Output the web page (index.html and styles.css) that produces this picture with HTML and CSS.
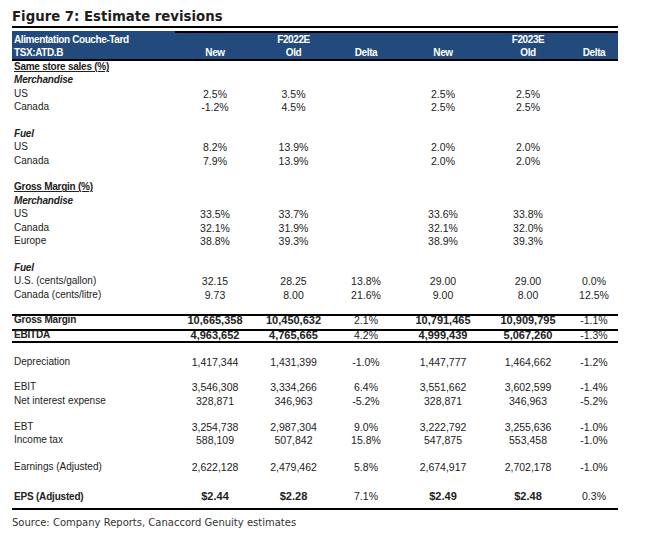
FILE: index.html
```html
<!DOCTYPE html>
<html>
<head>
<meta charset="utf-8">
<link rel="stylesheet" href="styles.css">
</head>
<body>
<div class="fig">
  <h1 class="title">Figure 7: Estimate revisions</h1>
  <table class="est">
    <colgroup>
      <col class="c-label"><col class="c1"><col class="c2"><col class="c3"><col class="c4"><col class="c5"><col class="c6">
    </colgroup>
    <tr class="h1">
      <td class="lab">Alimentation Couche-Tard</td><td></td><td>F2022E</td><td></td><td></td><td>F2023E</td><td></td>
    </tr>
    <tr class="h2">
      <td class="lab">TSX:ATD.B</td><td>New</td><td>Old</td><td>Delta</td><td>New</td><td>Old</td><td>Delta</td>
    </tr>
    <tr class="sec"><td class="lab"><u>Same store sales (%)</u></td><td></td><td></td><td></td><td></td><td></td><td></td></tr>
    <tr class="sub"><td class="lab">Merchandise</td><td></td><td></td><td></td><td></td><td></td><td></td></tr>
    <tr class="r"><td class="lab">US</td><td>2.5%</td><td>3.5%</td><td></td><td>2.5%</td><td>2.5%</td><td></td></tr>
    <tr class="r"><td class="lab">Canada</td><td>-1.2%</td><td>4.5%</td><td></td><td>2.5%</td><td>2.5%</td><td></td></tr>
    <tr class="blank"><td colspan="7"></td></tr>
    <tr class="sub"><td class="lab">Fuel</td><td></td><td></td><td></td><td></td><td></td><td></td></tr>
    <tr class="r"><td class="lab">US</td><td>8.2%</td><td>13.9%</td><td></td><td>2.0%</td><td>2.0%</td><td></td></tr>
    <tr class="r"><td class="lab">Canada</td><td>7.9%</td><td>13.9%</td><td></td><td>2.0%</td><td>2.0%</td><td></td></tr>
    <tr class="blank"><td colspan="7"></td></tr>
    <tr class="sec2"><td class="lab"><u>Gross Margin (%)</u></td><td></td><td></td><td></td><td></td><td></td><td></td></tr>
    <tr class="sub"><td class="lab">Merchandise</td><td></td><td></td><td></td><td></td><td></td><td></td></tr>
    <tr class="r"><td class="lab">US</td><td>33.5%</td><td>33.7%</td><td></td><td>33.6%</td><td>33.8%</td><td></td></tr>
    <tr class="r"><td class="lab">Canada</td><td>32.1%</td><td>31.9%</td><td></td><td>32.1%</td><td>32.0%</td><td></td></tr>
    <tr class="r"><td class="lab">Europe</td><td>38.8%</td><td>39.3%</td><td></td><td>38.9%</td><td>39.3%</td><td></td></tr>
    <tr class="blank"><td colspan="7"></td></tr>
    <tr class="sub"><td class="lab">Fuel</td><td></td><td></td><td></td><td></td><td></td><td></td></tr>
    <tr class="r"><td class="lab">U.S. (cents/gallon)</td><td>32.15</td><td>28.25</td><td>13.8%</td><td>29.00</td><td>29.00</td><td>0.0%</td></tr>
    <tr class="r"><td class="lab">Canada (cents/litre)</td><td>9.73</td><td>8.00</td><td>21.6%</td><td>9.00</td><td>8.00</td><td>12.5%</td></tr>
    <tr class="blank b-pre"><td colspan="7"></td></tr>
    <tr class="gm"><td class="lab">Gross Margin</td><td class="bv">10,665,358</td><td class="bv">10,450,632</td><td>2.1%</td><td class="bv">10,791,465</td><td class="bv">10,909,795</td><td>-1.1%</td></tr>
    <tr class="ebitda"><td class="lab">EBITDA</td><td class="bv">4,963,652</td><td class="bv">4,765,665</td><td>4.2%</td><td class="bv">4,999,439</td><td class="bv">5,067,260</td><td>-1.3%</td></tr>
    <tr class="blank b-post"><td colspan="7"></td></tr>
    <tr class="r"><td class="lab">Depreciation</td><td>1,417,344</td><td>1,431,399</td><td>-1.0%</td><td>1,447,777</td><td>1,464,662</td><td>-1.2%</td></tr>
    <tr class="blank b-short"><td colspan="7"></td></tr>
    <tr class="r"><td class="lab">EBIT</td><td>3,546,308</td><td>3,334,266</td><td>6.4%</td><td>3,551,662</td><td>3,602,599</td><td>-1.4%</td></tr>
    <tr class="r"><td class="lab">Net interest expense</td><td>328,871</td><td>346,963</td><td>-5.2%</td><td>328,871</td><td>346,963</td><td>-5.2%</td></tr>
    <tr class="blank b-mid"><td colspan="7"></td></tr>
    <tr class="r"><td class="lab">EBT</td><td>3,254,738</td><td>2,987,304</td><td>9.0%</td><td>3,222,792</td><td>3,255,636</td><td>-1.0%</td></tr>
    <tr class="r"><td class="lab">Income tax</td><td>588,109</td><td>507,842</td><td>15.8%</td><td>547,875</td><td>553,458</td><td>-1.0%</td></tr>
    <tr class="blank"><td colspan="7"></td></tr>
    <tr class="r"><td class="lab">Earnings (Adjusted)</td><td>2,622,128</td><td>2,479,462</td><td>5.8%</td><td>2,674,917</td><td>2,702,178</td><td>-1.0%</td></tr>
    <tr class="blank b-eps"><td colspan="7"></td></tr>
    <tr class="eps"><td class="lab">EPS (Adjusted)</td><td class="bv">$2.44</td><td class="bv">$2.28</td><td>7.1%</td><td class="bv">$2.49</td><td class="bv">$2.48</td><td>0.3%</td></tr>
  </table>
  <p class="source">Source: Company Reports, Canaccord Genuity estimates</p>
</div>
</body>
</html>
```
FILE: styles.css
```css
html, body {
  margin: 0;
  padding: 0;
  background: #fff;
}

.fig {
  width: 606px;
  margin-left: 12px;
  padding-top: 9px;
}

.title {
  margin: 0;
  font-family: "DejaVu Sans", Verdana, sans-serif;
  font-weight: bold;
  font-size: 13.3px;
  line-height: 16px;
  color: #1e1e1e;
  padding-bottom: 0.5px;
  border-bottom: 2px solid #000;
}

.est {
  margin-top: 3.5px;
  width: 606px;
  table-layout: fixed;
  border-collapse: separate;
  border-spacing: 0;
  font-family: "Liberation Sans", Arial, sans-serif;
  font-size: 10.5px;
  color: #222;
}

.c-label { width: 163px; }
.c1 { width: 80px; }
.c2 { width: 77px; }
.c3 { width: 68px; }
.c4 { width: 86px; }
.c5 { width: 84px; }
.c6 { width: 48px; }

.est td {
  padding: 0;
  text-align: center;
  vertical-align: middle;
  white-space: nowrap;
  line-height: 12px;
}

.est td.lab {
  text-align: left;
  padding-left: 2px;
  font-size: 10px;
}

/* row heights */
.r, .sub, .sec2, .blank { height: 13.4px; }
.sec { height: 12.2px; }
.blank.b-pre { height: 12.6px; }
.blank.b-post { height: 12.3px; }
.blank.b-short { height: 12.1px; }
.blank.b-mid { height: 13px; }
.blank.b-eps { height: 16.1px; }

/* header */
.h1 td,
.h2 td {
  background: #224a7c;
  color: #fff;
  font-weight: bold;
  font-size: 10px;
  letter-spacing: -0.4px;
}
.h1 td {
  line-height: 13px;
  border-top: 2px solid #000;
}
.h1 td.lab {
  border-top-color: #224a7c;
}
.h2 td {
  line-height: 13.4px;
  border-bottom: 2px solid #000;
}

.sec td { line-height: 12.2px; }
.sec td.lab,
.sec2 td.lab {
  font-weight: bold;
  letter-spacing: -0.25px;
}
.sub td.lab {
  font-weight: bold;
  font-style: italic;
  letter-spacing: -0.2px;
}

.bv {
  font-weight: bold;
  font-size: 11px;
}

.gm td {
  border-top: 2px solid #000;
  vertical-align: top;
  line-height: 8.6px;
  padding-bottom: 4.7px;
}
.ebitda td {
  border-top: 2px solid #000;
  border-bottom: 2px solid #000;
  vertical-align: top;
  line-height: 8.6px;
  padding-bottom: 1.1px;
}
.gm td.lab,
.ebitda td.lab,
.eps td.lab {
  font-weight: bold;
  letter-spacing: -0.2px;
}

.eps td {
  vertical-align: top;
  line-height: 13.4px;
  padding-bottom: 4.3px;
  border-bottom: 2px solid #000;
}

.source {
  margin: 7.7px 0 0;
  font-family: "DejaVu Sans", Verdana, sans-serif;
  font-size: 10px;
  line-height: 12px;
  color: #333;
}
```
